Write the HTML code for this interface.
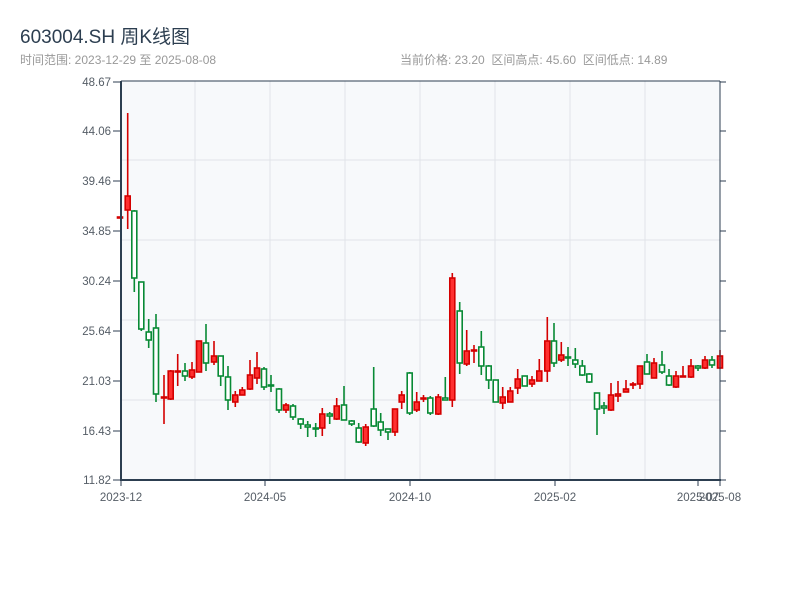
<!DOCTYPE html>
<html><head><meta charset="utf-8"><style>
body{margin:0;background:#fff;width:800px;height:600px;overflow:hidden;font-family:"Liberation Sans","Noto Sans CJK SC",sans-serif}
.t{position:absolute;left:20px;top:22px;font-size:19px;color:#2c3e50}
.s{position:absolute;top:51px;font-size:12px;color:#999}
</style></head><body>
<div class="t">603004.SH 周K线图</div>
<div class="s" style="left:20px">时间范围: 2023-12-29 至 2025-08-08</div>
<div class="s" style="left:400px">当前价格: 23.20&nbsp;&nbsp;区间高点: 45.60&nbsp;&nbsp;区间低点: 14.89</div>
<svg id="c" width="800" height="600" style="position:absolute;left:0;top:0" font-family="Liberation Sans, sans-serif">
<rect x="121" y="81" width="599" height="399" fill="#f7f9fb"/>
<g stroke="#e1e4e8" stroke-width="1">
<line x1="121" x2="720" y1="160" y2="160"/><line x1="121" x2="720" y1="240" y2="240"/><line x1="121" x2="720" y1="320" y2="320"/><line x1="121" x2="720" y1="400" y2="400"/>
<line y1="81" y2="480" x1="195" x2="195"/><line y1="81" y2="480" x1="270" x2="270"/><line y1="81" y2="480" x1="345" x2="345"/><line y1="81" y2="480" x1="420" x2="420"/><line y1="81" y2="480" x1="495" x2="495"/><line y1="81" y2="480" x1="570" x2="570"/><line y1="81" y2="480" x1="645" x2="645"/>
</g>
<g id="k"></g>
<g stroke="#2c3e50" fill="none">
<line x1="121" x2="121" y1="81" y2="481" stroke-width="2"/>
<line x1="120" x2="721" y1="480" y2="480" stroke-width="2"/>
<line x1="121" x2="720" y1="81" y2="81" stroke-width="1"/>
<line x1="720" x2="720" y1="81" y2="480" stroke-width="1"/>
</g>
<g id="ax" font-size="11.5" fill="#555d66"></g>
</svg>
<script>
var d=[
[120,217,218,217,218,'r'],[127.7,113,229,196,210,'r'],[134.3,210,292,211,278,'g'],[141.3,282,331,282,329,'g'],[148.7,319,348,332,340,'g'],[156,314,402,328,394,'g'],[164,375,424,397,398,'r'],[170.7,370,400,371,399,'r'],[177.7,354,386,371,372,'r'],[185,363,381,371,376,'g'],[192,362,379,370,377,'r'],[199,341,372,341,372,'r'],[206,324,371,343,363,'g'],[214,341,365,356,362,'r'],[220.7,356,386,356,376,'g'],[228,366,410,377,400,'g'],[235.3,391,407,395,402,'r'],[242.3,387,395,390,395,'r'],[250,360,390,375,389,'r'],[257,352,384,368,378,'r'],[264,367,390,369,387,'g'],[271,375,392,385,386,'g'],[279,388,413,389,410,'g'],[286,403,413,405,410,'r'],[293,404,420,406,417,'g'],[300.7,418,429,419,424,'g'],[307.7,421,437,425,427,'g'],[315.7,423,437,428,429,'g'],[322.3,408,436,414,428,'r'],[329.7,412,424,414,416,'g'],[336.7,398,420,406,419,'r'],[344,386,420,405,420,'g'],[351.7,420,426,421,424,'g'],[358.7,423,443,428,442,'g'],[365.7,424,446,427,443,'r'],[373.7,367,427,409,426,'g'],[380.7,413,436,422,430,'g'],[388,429,440,429,432,'g'],[395,409,436,409,432,'r'],[401.7,391,409,395,402,'r'],[409.7,372,415,373,413,'g'],[416.7,392,412,402,410,'r'],[423.5,395,402,398,399,'r'],[430.3,396,415,398,413,'g'],[438.3,394,415,397,414,'r'],[445.3,377,400,398,400,'g'],[452.3,273,407,278,400,'r'],[459.7,302,374,311,363,'g'],[466.7,330,366,351,364,'r'],[474,345,363,350,351,'r'],[481.3,331,375,347,366,'g'],[488.7,365,389,366,380,'g'],[495.7,380,402,380,402,'g'],[502.7,387,409,397,403,'r'],[510.3,387,402,391,402,'r'],[517.7,369,394,379,388,'r'],[524.7,376,386,376,386,'g'],[532,376,387,380,384,'r'],[539.3,359,381,371,381,'r'],[547.3,317,382,341,371,'r'],[554,323,367,341,363,'g'],[561.3,342,362,355,360,'r'],[568,347,366,357,358,'g'],[575.3,348,368,360,364,'g'],[582.3,360,376,366,375,'g'],[589.3,373,383,374,382,'g'],[597,393,435,393,409,'g'],[604,402,414,406,408,'g'],[611,383,411,395,410,'r'],[618,381,402,394,396,'r'],[626,380,392,389,392,'r'],[633,382,389,384,385,'r'],[640,366,389,366,384,'r'],[647,354,374,362,374,'g'],[654,358,378,363,378,'r'],[662,351,374,365,372,'g'],[669,369,386,376,385,'g'],[676,371,388,376,387,'r'],[683,366,377,376,377,'r'],[691,359,378,366,377,'r'],[698,365,371,366,368,'g'],[705,356,369,360,368,'r'],[712,356,368,360,365,'g'],[720,350,369,356,368,'r']];
var h='';
d.forEach(function(c){var col=c[5]=='r'?'#d40000':'#088a35',fill=c[5]=='r'?'#ff3030':'#fff';
h+='<line x1="'+c[0]+'" x2="'+c[0]+'" y1="'+c[1]+'" y2="'+c[2]+'" stroke="'+col+'" stroke-width="1.6"/>';
var bh=Math.max(c[4]-c[3],1);h+='<rect x="'+(c[0]-2.5)+'" y="'+c[3]+'" width="5" height="'+bh+'" fill="'+fill+'" stroke="'+col+'" stroke-width="1.6"/>';});
document.getElementById('k').innerHTML=h;
var a='',ys=[[82,'48.67'],[131,'44.06'],[181,'39.46'],[231,'34.85'],[281,'30.24'],[331,'25.64'],[381,'21.03'],[431,'16.43'],[480,'11.82']];
ys.forEach(function(y){a+='<line x1="113" x2="121" y1="'+y[0]+'" y2="'+y[0]+'" stroke="#2c3e50"/><line x1="720" x2="726" y1="'+y[0]+'" y2="'+y[0]+'" stroke="#2c3e50"/><text x="111" y="'+(y[0]+4)+'" text-anchor="end">'+y[1]+'</text>';});
[[121,'2023-12'],[265,'2024-05'],[410,'2024-10'],[555,'2025-02'],[698,'2025-07'],[720,'2025-08']].forEach(function(x){a+='<line x1="'+x[0]+'" x2="'+x[0]+'" y1="480" y2="486" stroke="#2c3e50"/><text x="'+x[0]+'" y="501" text-anchor="middle">'+x[1]+'</text>';});
document.getElementById('ax').innerHTML=a;
</script>
</body></html>
